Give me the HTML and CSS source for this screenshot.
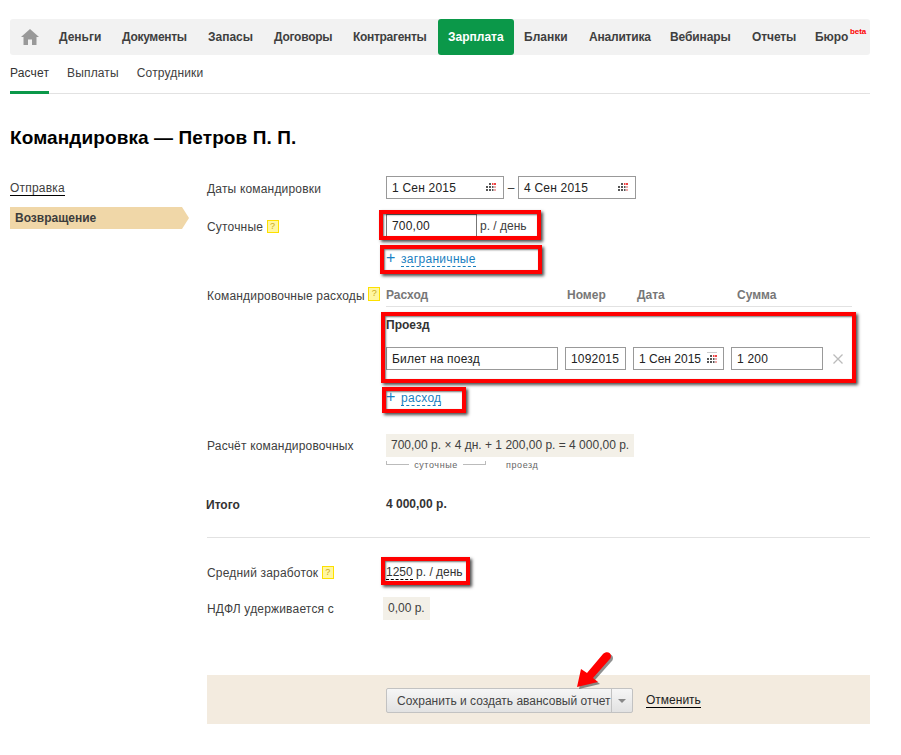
FILE: index.html
```html
<!DOCTYPE html>
<html lang="ru">
<head>
<meta charset="utf-8">
<title>Командировка — Петров П. П.</title>
<link rel="stylesheet" href="styles.css">
</head>
<body>
<div class="page">
  <nav class="topnav">
    <a class="home" aria-label="Главная"><svg width="18" height="16" viewBox="0 0 18 16"><path d="M9 0 L18 8 L15.500 8 L15.500 16 L11 16 L11 10.500 L7 10.500 L7 16 L2.500 16 L2.500 8 L0 8 Z" fill="#999"/></svg></a>
    <a class="nav-item n-money">Деньги</a>
    <a class="nav-item n-docs">Документы</a>
    <a class="nav-item n-stock">Запасы</a>
    <a class="nav-item n-contracts">Договоры</a>
    <a class="nav-item n-agents">Контрагенты</a>
    <a class="nav-item active">Зарплата</a>
    <a class="nav-item n-forms">Бланки</a>
    <a class="nav-item n-analytics">Аналитика</a>
    <a class="nav-item n-web">Вебинары</a>
    <a class="nav-item n-reports">Отчеты</a>
    <a class="nav-item n-bureau">Бюро<sup class="beta">beta</sup></a>
  </nav>
  <div class="subnav">
    <a class="tab current">Расчет</a>
    <a class="tab">Выплаты</a>
    <a class="tab">Сотрудники</a>
  </div>
  <h1 class="title">Командировка — Петров П. П.</h1>
  <div class="columns">
    <aside class="side">
      <a class="side-link">Отправка</a>
      <div class="side-current">Возвращение</div>
    </aside>
    <main class="form">
      <div class="row r-dates">
        <div class="label">Даты командировки</div>
        <div class="value dates">
          <span class="field date-field">1 Сен 2015<svg class="cal" width="10" height="8" viewBox="0 0 10 8"><path d="M0 3h2v2H0zM0 6h2v2H0zM3 0h2v2H3zM3 3h2v2H3zM3 6h2v2H3zM6 3h1.500v2H6zM6 6h1.500v2H6z" fill="#555"/><path d="M6 0h1.500v2H6zM8 0h2v2H8z" fill="#e44"/><path d="M8 3h2v2H8zM8 6h2v2H8z" fill="#eaa"/></svg></span>
          <span class="dash">–</span>
          <span class="field date-field">4 Сен 2015<svg class="cal" width="10" height="8" viewBox="0 0 10 8"><path d="M0 3h2v2H0zM0 6h2v2H0zM3 0h2v2H3zM3 3h2v2H3zM3 6h2v2H3zM6 3h1.500v2H6zM6 6h1.500v2H6z" fill="#555"/><path d="M6 0h1.500v2H6zM8 0h2v2H8z" fill="#e44"/><path d="M8 3h2v2H8zM8 6h2v2H8z" fill="#eaa"/></svg></span>
        </div>
      </div>
      <div class="row r-daily">
        <div class="label">Суточные <span class="hint">?</span></div>
        <div class="value"><span class="field daily-field">700,00</span><span class="unit">р. / день</span></div>
      </div>
      <div class="row r-foreign">
        <div class="label"></div>
        <div class="value"><span class="plus">+</span><a class="dashed">заграничные</a></div>
      </div>
      <div class="row r-head">
        <div class="label">Командировочные расходы <span class="hint hint-high">?</span></div>
        <div class="value exp-head"><span class="h-name">Расход</span><span class="h-num">Номер</span><span class="h-date">Дата</span><span>Сумма</span></div>
      </div>
      <div class="row r-group">
        <div class="label"></div>
        <div class="value group-name">Проезд</div>
      </div>
      <div class="row r-expense">
        <div class="label"></div>
        <div class="value exp-fields">
          <span class="field f-name">Билет на поезд</span>
          <span class="field f-num">1092015</span>
          <span class="field f-date">1 Сен 2015<svg class="cal-s" width="10" height="11" viewBox="0 0 10 11"><path d="M0 0h10v1H0z" fill="#ccc"/><path d="M0 6h2v2H0zM0 9h2v2H0zM3 3h2v2H3zM3 6h2v2H3zM3 9h2v2H3zM6 6h1.500v2H6zM6 9h1.500v2H6z" fill="#555"/><path d="M6 3h1.500v2H6zM8 3h2v2H8z" fill="#e44"/><path d="M8 6h2v2H8zM8 9h2v2H8z" fill="#eaa"/></svg></span>
          <span class="field f-sum">1 200</span>
          <svg class="remove" width="10" height="10" viewBox="0 0 10 10"><path d="M.5.5l9 9M9.500.5l-9 9" stroke="#bbb" stroke-width="1.300" fill="none"/></svg>
        </div>
      </div>
      <div class="row r-add">
        <div class="label"></div>
        <div class="value"><span class="plus">+</span><a class="dashed">расход</a></div>
      </div>
      <div class="row r-calc">
        <div class="label">Расчёт командировочных</div>
        <div class="value calc">
          <div class="calc-box">700,00 р. × 4 дн. + 1 200,00 р. = 4 000,00 р.</div>
          <div class="calc-notes"><span class="brace"><i></i>суточные<i></i></span><span class="note">проезд</span></div>
        </div>
      </div>
      <div class="row r-total">
        <div class="label strong">Итого</div>
        <div class="value strong">4 000,00 р.</div>
      </div>
      <hr class="sep">
      <div class="row r-avg">
        <div class="label">Средний заработок <span class="hint">?</span></div>
        <div class="value"><a class="dashed dark">1250</a> р. / день</div>
      </div>
      <div class="row r-ndfl">
        <div class="label">НДФЛ удерживается с</div>
        <div class="value"><span class="ndfl-box">0,00 р.</span></div>
      </div>
      <div class="actions">
        <div class="split">
          <span class="split-main">Сохранить и создать авансовый отчет</span>
          <span class="split-arrow"></span>
        </div>
        <a class="cancel">Отменить</a>
      </div>
    </main>
  </div>
  <div class="mark m1"></div>
  <div class="mark m2"></div>
  <div class="mark m3"></div>
  <div class="mark m4"></div>
  <div class="mark m5"></div>
  <svg class="pointer" width="44" height="44" viewBox="0 0 44 44"><path d="M3 37 L7 19 L13 23 L29 4 C32 1 37 2 37 6 C37 8 36 9 35 10 L19 28 L24 32 Z" fill="#222" opacity=".5" transform="translate(2 2)"/><path d="M3 37 L7 19 L13 23 L29 4 C32 1 37 2 37 6 C37 8 36 9 35 10 L19 28 L24 32 Z" fill="#f00"/></svg>
</div>
</body>
</html>
```
FILE: styles.css
```css
* { box-sizing: border-box; }
html, body { margin: 0; padding: 0; background: #fff; }
body { font-family: "Liberation Sans", Arial, sans-serif; font-size: 12px; color: #3c3c3c; }
.page { position: relative; width: 901px; height: 755px; padding: 19px 31px 0 10px; overflow: hidden; }

.topnav { display: flex; align-items: stretch; height: 36px; background: #f2f2f2; border-radius: 3px; }
.home { display: flex; align-items: center; flex: none; margin-left: 11px; width: 38px; }
.nav-item { display: flex; align-items: center; flex: none; font-weight: bold; font-size: 12px; color: #3f3f3f; white-space: nowrap; }
.n-money { width: 63px; }
.n-docs { width: 86px; letter-spacing: -.3px; }
.n-stock { width: 66px; }
.n-contracts { width: 79px; letter-spacing: -.25px; }
.n-agents { width: 85px; letter-spacing: -.3px; }
.nav-item.active { width: 76px; margin-right: 10px; padding-left: 10px; background: #0b9849; color: #fff; border-radius: 3px; }
.n-forms { width: 65px; }
.n-analytics { width: 81px; letter-spacing: -.2px; }
.n-web { width: 82px; letter-spacing: -.1px; }
.n-reports { width: 63px; letter-spacing: -.1px; }
.n-bureau { position: relative; flex: 1; letter-spacing: -.1px; }
.beta { position: absolute; left: 35px; top: 8px; font-size: 8px; line-height: 9px; color: #f00; font-weight: bold; }

.subnav { display: flex; gap: 18px; height: 39px; border-bottom: 1px solid #e2e2e2; }
.tab { display: block; padding-top: 11px; height: 38px; font-size: 12px; letter-spacing: .15px; color: #404040; }
.tab.current { color: #333; border-bottom: 3px solid #0b9849; height: 39px; }

.title { margin: 33px 0 0; height: 22px; font-size: 19px; letter-spacing: .1px; line-height: 22px; font-weight: bold; color: #000; }

.columns { display: flex; margin-top: 27px; }
.side { width: 197px; flex: none; }
.side-link { display: inline-block; color: #404040; letter-spacing: .2px; border-bottom: 1px solid #000; line-height: 13px; margin-top: 6px; }
.side-current { position: relative; width: 172px; height: 22px; margin-top: 11px; padding-left: 5px; line-height: 22px; background: #f0d7a8; font-weight: bold; }
.side-current::after { content: ""; position: absolute; left: 172px; top: 0; border-left: 7px solid #f0d7a8; border-top: 11px solid transparent; border-bottom: 11px solid transparent; }

.form { flex: 1; min-width: 0; }
.row { display: flex; align-items: center; }
.label { flex: none; width: 179px; padding-top: 2px; color: #404040; letter-spacing: .18px; white-space: nowrap; }
.value { flex: 1; min-width: 0; color: #333; white-space: nowrap; }
.strong { font-weight: bold; color: #333; letter-spacing: 0; }
.label.strong { margin-left: -1px; margin-right: 1px; }

.field { display: inline-block; height: 23px; line-height: 23px; border: 1px solid #999; background: #fff; padding: 0 5px; color: #222; letter-spacing: .2px; position: relative; }
.dates { display: flex; align-items: center; }
.date-field { width: 118px; }
.dash { width: 14px; text-align: center; }
.cal { position: absolute; right: 7px; top: 6px; }
.cal-s { position: absolute; right: 6px; top: 4px; }
.hint { display: inline-block; width: 12px; height: 13px; line-height: 11px; border: 1px solid #fde000; background: #fff6a0; color: #c9a820; font-size: 9px; letter-spacing: 0; text-align: center; vertical-align: 2px; }
.hint-high { height: 14px; vertical-align: 4px; }

.r-dates { height: 23px; }
.r-daily { height: 23px; margin-top: 15px; }
.daily-field { width: 91px; border-color: #777; }
.unit { display: inline-block; margin-left: 3px; padding-top: 1px; color: #404040; }
.r-foreign { height: 20px; margin-top: 12px; }
.plus { color: #1a82c4; font-size: 16px; line-height: 14px; display: inline-block; width: 15px; }
.dashed { color: #1a7fbf; letter-spacing: .3px; border-bottom: 1px dashed #1a7fbf; line-height: 13px; display: inline-block; }
.dashed.dark { color: #333; letter-spacing: 0; border-bottom-color: #000; }

.r-head { height: 23px; margin-top: 15px; align-items: flex-start; }
.r-head .label { line-height: 16px; padding-top: 3px; }
.exp-head { display: flex; height: 23px; line-height: 16px; padding-top: 3px; font-weight: bold; color: #777; border-bottom: 1px solid #e2e2e2; margin-right: 18px; }
.h-name { width: 181px; }
.h-num { width: 70px; }
.h-date { width: 100px; }
.r-group { height: 16px; margin-top: 10px; }
.group-name { font-weight: bold; color: #333; }
.r-expense { height: 23px; margin-top: 14px; }
.exp-fields { display: flex; align-items: center; gap: 7px; }
.f-name { width: 172px; }
.f-num { width: 61px; }
.f-date { width: 91px; letter-spacing: 0; }
.f-sum { width: 92px; }
.remove { margin-left: 3px; }
.r-add { height: 20px; margin-top: 18px; }

.r-calc { margin-top: 26px; align-items: flex-start; }
.r-calc .label { margin-top: 3px; }
.calc-box { display: inline-block; height: 23px; line-height: 23px; padding: 0 5px; background: #f3f0e8; color: #404040; }
.calc-notes { display: flex; height: 13px; margin-top: 2px; font-size: 9px; letter-spacing: .6px; color: #666; line-height: 12px; }
.brace { display: flex; align-items: flex-start; width: 100px; gap: 5px; }
.brace i { flex: 1; height: 4px; border-bottom: 1px solid #bbb; margin-top: 2px; }
.brace i:first-child { border-left: 1px solid #bbb; }
.brace i:last-child { border-right: 1px solid #bbb; }
.note { margin-left: 20px; }
.r-total { height: 16px; margin-top: 24px; }
.sep { height: 1px; border: 0; margin: 25px 0 0; background: #e2e2e2; }
.r-avg { height: 16px; margin-top: 26px; }
.r-ndfl { height: 22px; margin-top: 17px; }
.ndfl-box { display: inline-block; height: 23px; line-height: 23px; padding: 0 5px; margin-left: -3px; background: #f3f0e8; color: #404040; }

.actions { display: flex; align-items: center; height: 49px; margin-top: 56px; padding: 2px 0 0 179px; background: #f3ebdf; }
.split { display: flex; height: 25px; width: 247px; border: 1px solid #c2c2c2; border-radius: 2px; background: linear-gradient(#f6f6f6, #e2e2e2); }
.split-main { flex: 1; min-width: 0; padding-left: 10px; line-height: 24px; white-space: nowrap; color: #444; }
.split-arrow { position: relative; width: 21px; flex: none; border-left: 1px solid #c2c2c2; }
.split-arrow::after { content: ""; position: absolute; left: 6px; top: 10px; border-top: 4px solid #888; border-left: 4px solid transparent; border-right: 4px solid transparent; }
.cancel { margin-left: 13px; color: #222; border-bottom: 1px solid #000; line-height: 13px; }

.mark { position: absolute; border: 4px solid #f00; box-shadow: 2px 2px 3px rgba(0,0,0,.7), inset 1px 1px 2px rgba(0,0,0,.55); }
.m1 { left: 379px; top: 210px; width: 162px; height: 30px; }
.m2 { left: 380px; top: 245px; width: 162px; height: 29px; }
.m3 { left: 381px; top: 312px; width: 475px; height: 71px; }
.m4 { left: 382px; top: 387px; width: 84px; height: 26px; }
.m5 { left: 381px; top: 557px; width: 89px; height: 28px; }
.pointer { position: absolute; left: 574px; top: 650px; }
```
